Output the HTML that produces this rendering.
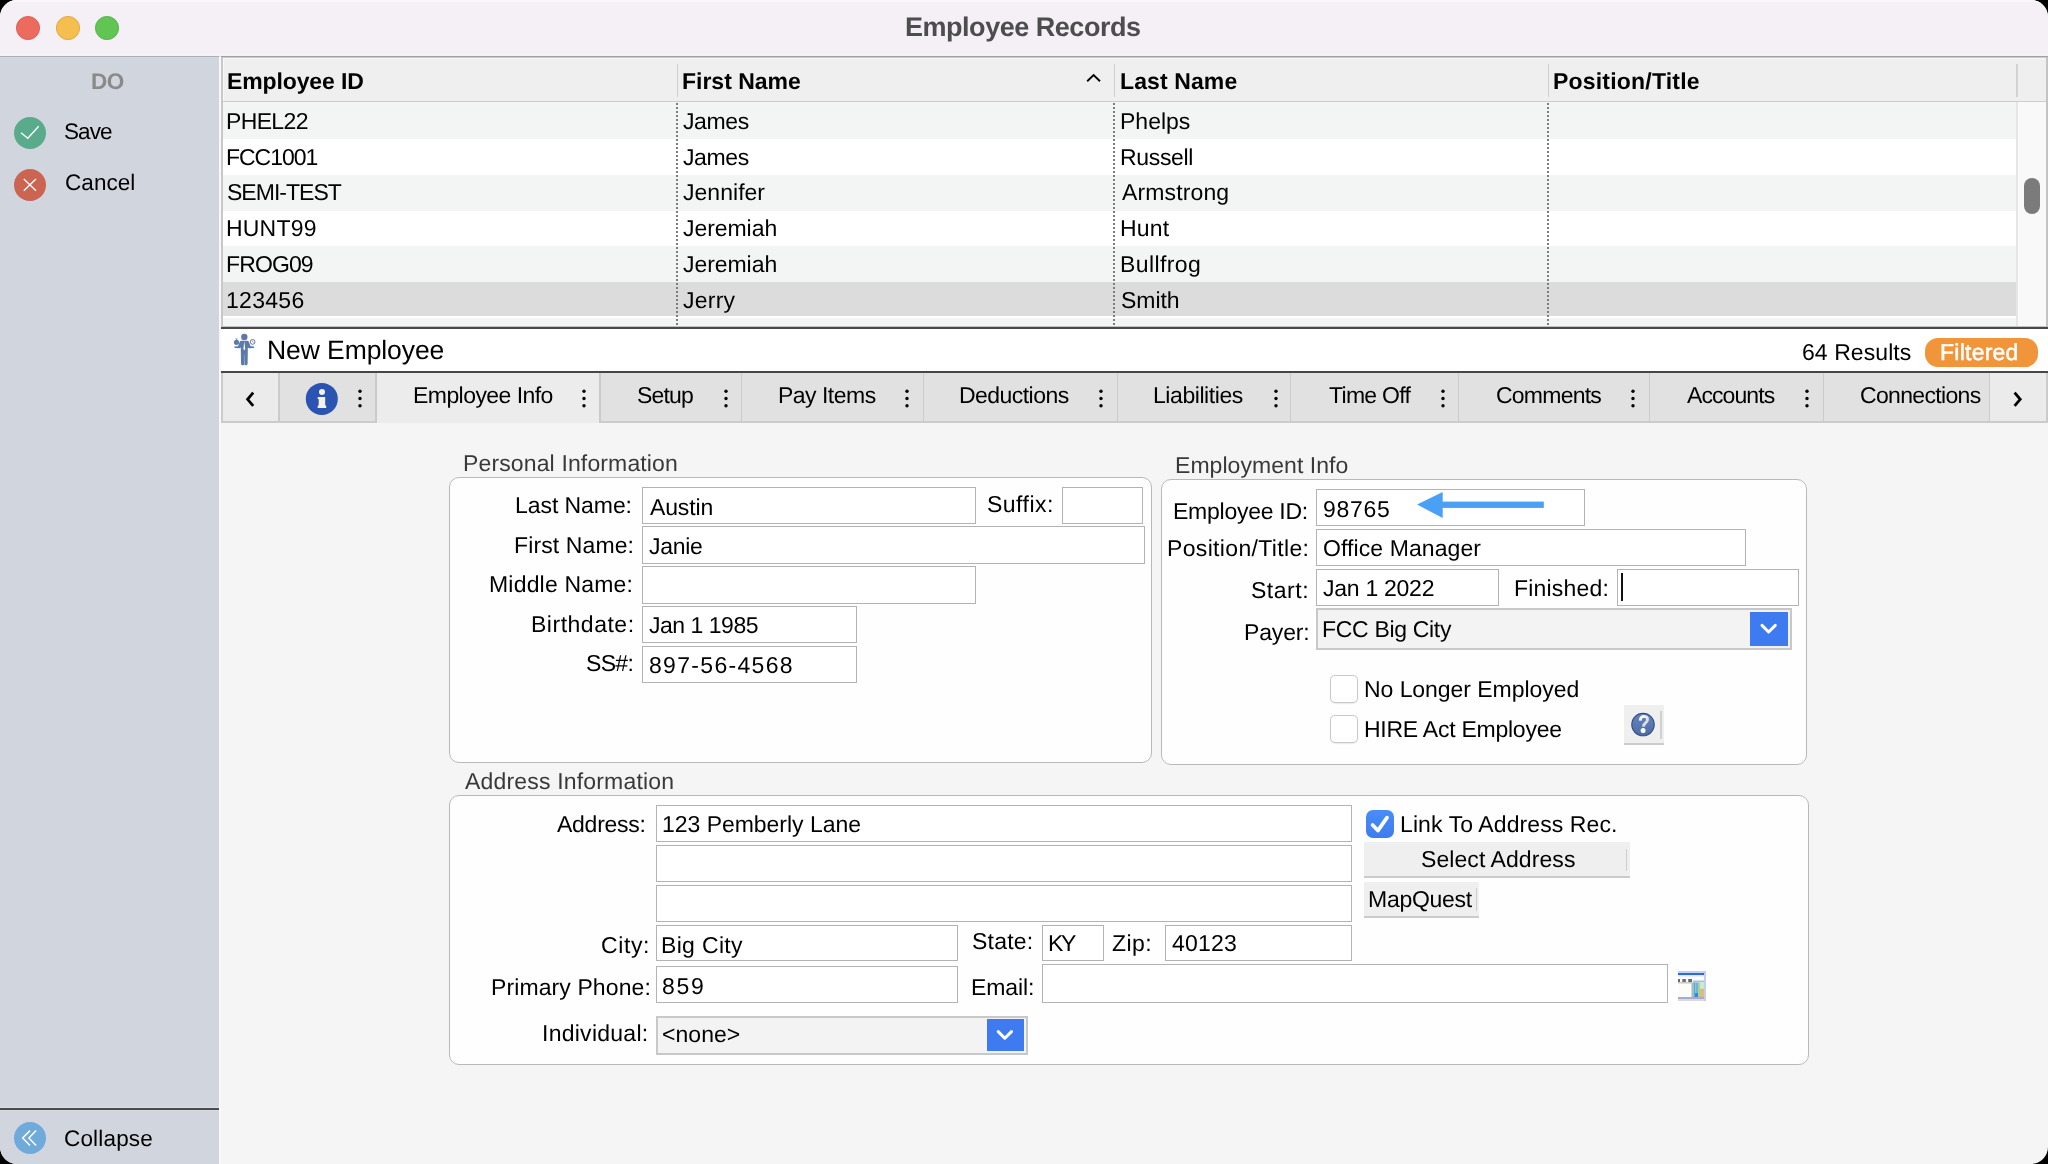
<!DOCTYPE html>
<html><head><meta charset="utf-8"><style>
html,body{margin:0;padding:0;background:#000;width:2048px;height:1164px;overflow:hidden}
div{font-family:"Liberation Sans",sans-serif;white-space:pre}
.t{will-change:transform;text-rendering:geometricPrecision}
#win{position:absolute;left:0;top:0;width:2048px;height:1164px;border-radius:17px;overflow:hidden;background:#f5f5f5}
</style></head><body><div id="win">
<div style='position:absolute;left:0px;top:0px;width:2048px;height:56px;background:#f5f0f6;z-index:1'></div>
<div style='position:absolute;left:0px;top:0px;width:2048px;height:2px;background:#faf7fa;z-index:1'></div>
<div style='position:absolute;left:0px;top:54px;width:2048px;height:1px;background:#f8f4f9;z-index:1'></div>
<div style='position:absolute;left:0px;top:56px;width:219px;height:1px;background:#a8b0bb;z-index:1'></div>
<div style='position:absolute;left:219px;top:56px;width:2px;height:1px;background:#e2e2e2;z-index:1'></div>
<div style='position:absolute;left:221px;top:56px;width:1827px;height:1px;background:#a2a2a2;z-index:1'></div>
<svg style='position:absolute;left:15px;top:15px;z-index:4' width='26' height='26' viewBox='0 0 26 26'><circle cx='13' cy='13' r='11.6' fill='#ed6a5e' stroke='#d5554a' stroke-width='0.8'/></svg>
<svg style='position:absolute;left:55px;top:15px;z-index:4' width='26' height='26' viewBox='0 0 26 26'><circle cx='13' cy='13' r='11.6' fill='#f5bf4f' stroke='#d9a032' stroke-width='0.8'/></svg>
<svg style='position:absolute;left:94px;top:15px;z-index:4' width='26' height='26' viewBox='0 0 26 26'><circle cx='13' cy='13' r='11.6' fill='#61c554' stroke='#4ea943' stroke-width='0.8'/></svg>
<div class='t' style='position:absolute;left:905.20px;top:14.10px;font-size:27px;line-height:27px;font-weight:700;color:#4d4d4d;letter-spacing:-0.473px;z-index:5;'>Employee Records</div>
<div style='position:absolute;left:0px;top:57px;width:219px;height:1107px;background:#d1d5de;z-index:1'></div>
<div style='position:absolute;left:219px;top:57px;width:2px;height:1107px;background:#f8f8f8;z-index:1'></div>
<div class='t' style='position:absolute;left:91.30px;top:71.40px;font-size:22.5px;line-height:22.5px;font-weight:700;color:#8a8a8a;letter-spacing:-0.500px;z-index:5;'>DO</div>
<svg style='position:absolute;left:14px;top:117px;z-index:4' width='32' height='32' viewBox='0 0 32 32'><circle cx='16' cy='16' r='16' fill='#59ab8b'/><path d='M7 15.8 L13.8 21.3 L24.7 9.3' fill='none' stroke='#fff' stroke-width='1.35'/></svg>
<div class='t' style='position:absolute;left:64.20px;top:120.60px;font-size:22.5px;line-height:22.5px;font-weight:400;color:#000;letter-spacing:-0.900px;z-index:5;'>Save</div>
<svg style='position:absolute;left:14px;top:169px;z-index:4' width='32' height='32' viewBox='0 0 32 32'><circle cx='16' cy='16' r='16' fill='#cc6452'/><path d='M9.8 10 L22 21.8 M22 10 L9.8 21.8' fill='none' stroke='#fff' stroke-width='1.35'/></svg>
<div class='t' style='position:absolute;left:64.50px;top:172.10px;font-size:22.5px;line-height:22.5px;font-weight:400;color:#000;letter-spacing:0.060px;z-index:5;'>Cancel</div>
<div style='position:absolute;left:0px;top:1107px;width:219px;height:1px;background:#dde0e8;z-index:1'></div>
<div style='position:absolute;left:0px;top:1108px;width:219px;height:2px;background:#4b4b4b;z-index:1'></div>
<div style='position:absolute;left:0px;top:1110px;width:219px;height:1px;background:#d8dbe3;z-index:1'></div>
<svg style='position:absolute;left:14px;top:1122px;z-index:4' width='32' height='32' viewBox='0 0 32 32'><circle cx='16' cy='16' r='16' fill='#6faadb'/><path d='M16 8.6 L8.7 16 L16 23.6 M22.1 8.6 L14.9 16 L22.1 23.6' fill='none' stroke='#fff' stroke-width='1.5'/></svg>
<div class='t' style='position:absolute;left:64.30px;top:1127.90px;font-size:22.5px;line-height:22.5px;font-weight:400;color:#000;letter-spacing:0.171px;z-index:5;'>Collapse</div>
<div style='position:absolute;left:221px;top:57px;width:1827px;height:270px;background:#ffffff;z-index:1'></div>
<div style='position:absolute;left:221px;top:57px;width:2px;height:270px;background:#c8c8c8;z-index:1'></div>
<div style='position:absolute;left:2046px;top:57px;width:2px;height:270px;background:#c4c4c4;z-index:1'></div>
<div style='position:absolute;left:223px;top:57px;width:1823px;height:44px;background:#efefef;z-index:1'></div>
<div style='position:absolute;left:223px;top:57px;width:1823px;height:1px;background:#c9c9c9;z-index:1'></div>
<div style='position:absolute;left:223px;top:58px;width:1823px;height:1px;background:#f8f8f8;z-index:1'></div>
<div style='position:absolute;left:223px;top:58px;width:1px;height:43px;background:#f8f8f8;z-index:1'></div>
<div style='position:absolute;left:223px;top:101px;width:1823px;height:1px;background:#cdcdcd;z-index:1'></div>
<div style='position:absolute;left:677px;top:64px;width:1px;height:33px;background:#cfcfcf;z-index:1'></div>
<div style='position:absolute;left:1114px;top:64px;width:1px;height:33px;background:#cfcfcf;z-index:1'></div>
<div style='position:absolute;left:1548px;top:64px;width:1px;height:33px;background:#cfcfcf;z-index:1'></div>
<div style='position:absolute;left:2016px;top:64px;width:2px;height:33px;background:#d2d2d2;z-index:1'></div>
<div class='t' style='position:absolute;left:227.00px;top:70.10px;font-size:23px;line-height:23px;font-weight:700;color:#000;letter-spacing:-0.130px;z-index:5;'>Employee ID</div>
<div class='t' style='position:absolute;left:682.10px;top:70.10px;font-size:23px;line-height:23px;font-weight:700;color:#000;letter-spacing:-0.011px;z-index:5;'>First Name</div>
<div class='t' style='position:absolute;left:1119.50px;top:70.10px;font-size:23px;line-height:23px;font-weight:700;color:#000;letter-spacing:0.113px;z-index:5;'>Last Name</div>
<div class='t' style='position:absolute;left:1553.00px;top:70.10px;font-size:23px;line-height:23px;font-weight:700;color:#000;letter-spacing:0.200px;z-index:5;'>Position/Title</div>
<svg style='position:absolute;left:1085px;top:72px;z-index:4' width='18' height='12' viewBox='0 0 18 12'><path d='M2.2 9.2 L8.6 3.0 L15 9.2' fill='none' stroke='#000' stroke-width='1.9'/></svg>
<div style='position:absolute;left:223px;top:102px;width:1793px;height:37px;background:#f3f4f4;z-index:1'></div>
<div style='position:absolute;left:223px;top:139px;width:1793px;height:36px;background:#ffffff;z-index:1'></div>
<div style='position:absolute;left:223px;top:175px;width:1793px;height:36px;background:#f3f4f4;z-index:1'></div>
<div style='position:absolute;left:223px;top:211px;width:1793px;height:35px;background:#ffffff;z-index:1'></div>
<div style='position:absolute;left:223px;top:246px;width:1793px;height:36px;background:#f3f4f4;z-index:1'></div>
<div style='position:absolute;left:223px;top:282px;width:1793px;height:36px;background:#ffffff;z-index:1'></div>
<div style='position:absolute;left:223px;top:318px;width:1793px;height:8px;background:#f3f4f4;z-index:1'></div>
<div style='position:absolute;left:223px;top:282px;width:1793px;height:34px;background:#dcdcdc;z-index:1'></div>
<div class='t' style='position:absolute;left:226.30px;top:109.90px;font-size:23px;line-height:23px;font-weight:400;color:#000;letter-spacing:-0.640px;z-index:5;'>PHEL22</div>
<div class='t' style='position:absolute;left:682.50px;top:109.90px;font-size:23px;line-height:23px;font-weight:400;color:#000;letter-spacing:-0.400px;z-index:5;'>James</div>
<div class='t' style='position:absolute;left:1119.50px;top:109.90px;font-size:23px;line-height:23px;font-weight:400;color:#000;letter-spacing:0.000px;z-index:5;'>Phelps</div>
<div class='t' style='position:absolute;left:226.30px;top:145.68px;font-size:23px;line-height:23px;font-weight:400;color:#000;letter-spacing:-1.033px;z-index:5;'>FCC1001</div>
<div class='t' style='position:absolute;left:682.50px;top:145.68px;font-size:23px;line-height:23px;font-weight:400;color:#000;letter-spacing:-0.400px;z-index:5;'>James</div>
<div class='t' style='position:absolute;left:1119.50px;top:145.68px;font-size:23px;line-height:23px;font-weight:400;color:#000;letter-spacing:-0.333px;z-index:5;'>Russell</div>
<div class='t' style='position:absolute;left:227.30px;top:181.46px;font-size:23px;line-height:23px;font-weight:400;color:#000;letter-spacing:-0.975px;z-index:5;'>SEMI-TEST</div>
<div class='t' style='position:absolute;left:682.50px;top:181.46px;font-size:23px;line-height:23px;font-weight:400;color:#000;letter-spacing:0.029px;z-index:5;'>Jennifer</div>
<div class='t' style='position:absolute;left:1121.50px;top:181.46px;font-size:23px;line-height:23px;font-weight:400;color:#000;letter-spacing:0.125px;z-index:5;'>Armstrong</div>
<div class='t' style='position:absolute;left:226.30px;top:217.24px;font-size:23px;line-height:23px;font-weight:400;color:#000;letter-spacing:0.200px;z-index:5;'>HUNT99</div>
<div class='t' style='position:absolute;left:682.50px;top:217.24px;font-size:23px;line-height:23px;font-weight:400;color:#000;letter-spacing:-0.057px;z-index:5;'>Jeremiah</div>
<div class='t' style='position:absolute;left:1119.50px;top:217.24px;font-size:23px;line-height:23px;font-weight:400;color:#000;letter-spacing:0.167px;z-index:5;'>Hunt</div>
<div class='t' style='position:absolute;left:226.30px;top:253.02px;font-size:23px;line-height:23px;font-weight:400;color:#000;letter-spacing:-0.880px;z-index:5;'>FROG09</div>
<div class='t' style='position:absolute;left:682.50px;top:253.02px;font-size:23px;line-height:23px;font-weight:400;color:#000;letter-spacing:-0.057px;z-index:5;'>Jeremiah</div>
<div class='t' style='position:absolute;left:1119.50px;top:253.02px;font-size:23px;line-height:23px;font-weight:400;color:#000;letter-spacing:0.400px;z-index:5;'>Bullfrog</div>
<div class='t' style='position:absolute;left:226.30px;top:288.80px;font-size:23px;line-height:23px;font-weight:400;color:#000;letter-spacing:0.300px;z-index:5;'>123456</div>
<div class='t' style='position:absolute;left:682.50px;top:288.80px;font-size:23px;line-height:23px;font-weight:400;color:#000;letter-spacing:0.250px;z-index:5;'>Jerry</div>
<div class='t' style='position:absolute;left:1120.50px;top:288.80px;font-size:23px;line-height:23px;font-weight:400;color:#000;letter-spacing:-0.050px;z-index:5;'>Smith</div>
<div style='position:absolute;left:676px;top:103px;width:2px;height:223px;background:repeating-linear-gradient(to bottom,#7d7d7d 0,#7d7d7d 2px,transparent 2px,transparent 4px);z-index:2'></div>
<div style='position:absolute;left:1113px;top:103px;width:2px;height:223px;background:repeating-linear-gradient(to bottom,#7d7d7d 0,#7d7d7d 2px,transparent 2px,transparent 4px);z-index:2'></div>
<div style='position:absolute;left:1547px;top:103px;width:2px;height:223px;background:repeating-linear-gradient(to bottom,#7d7d7d 0,#7d7d7d 2px,transparent 2px,transparent 4px);z-index:2'></div>
<div style='position:absolute;left:2016px;top:102px;width:2px;height:224px;background:#e6e6e6;z-index:1'></div>
<div style='position:absolute;left:2018px;top:102px;width:28px;height:224px;background:#f9f9f9;z-index:1'></div>
<div style='position:absolute;left:2024px;top:178px;width:16px;height:36px;background:#7b7b7b;border-radius:8px;z-index:1'></div>
<div style='position:absolute;left:223px;top:326px;width:1823px;height:1px;background:#c2c2c2;z-index:1'></div>
<div style='position:absolute;left:221px;top:327px;width:1827px;height:2px;background:#494949;z-index:1'></div>
<div style='position:absolute;left:221px;top:329px;width:1827px;height:42px;background:#ffffff;z-index:1'></div>
<div class='t' style='position:absolute;left:267.00px;top:337.40px;font-size:26.5px;line-height:26.5px;font-weight:400;color:#000;letter-spacing:-0.082px;z-index:5;'>New Employee</div>
<div class='t' style='position:absolute;left:1801.80px;top:340.80px;font-size:23px;line-height:23px;font-weight:400;color:#000;letter-spacing:0.067px;z-index:5;'>64 Results</div>
<div style='position:absolute;left:1925px;top:338px;width:113px;height:29px;background:#f0953a;border-radius:13px;z-index:1'></div>
<div class='t' style='position:absolute;left:1940.30px;top:340.80px;font-size:23px;line-height:23px;font-weight:400;color:#ffffff;letter-spacing:0.243px;z-index:5;-webkit-text-stroke:0.5px #fff'>Filtered</div>
<div style='position:absolute;left:221px;top:371px;width:1827px;height:2px;background:#474747;z-index:1'></div>
<div style='position:absolute;left:221px;top:373px;width:1827px;height:50px;background:#e1e1e1;z-index:1'></div>
<div style='position:absolute;left:221px;top:421px;width:1827px;height:2px;background:#cbcbcb;z-index:1'></div>
<div style='position:absolute;left:221px;top:373px;width:2px;height:50px;background:#cbcbcb;z-index:1'></div>
<div style='position:absolute;left:2046px;top:373px;width:2px;height:50px;background:#cbcbcb;z-index:1'></div>
<div style='position:absolute;left:223px;top:373px;width:55px;height:48px;background:#ebebeb;z-index:1'></div>
<div style='position:absolute;left:1990px;top:373px;width:56px;height:48px;background:#ebebeb;z-index:1'></div>
<div style='position:absolute;left:377px;top:373px;width:222px;height:50px;background:#ececec;z-index:1'></div>
<div style='position:absolute;left:278px;top:373px;width:2px;height:48px;background:#cbcbcb;z-index:1'></div>
<div style='position:absolute;left:375px;top:373px;width:2px;height:50px;background:#cbcbcb;z-index:1'></div>
<div style='position:absolute;left:599px;top:373px;width:2px;height:50px;background:#cbcbcb;z-index:1'></div>
<div style='position:absolute;left:741px;top:373px;width:1px;height:48px;background:#cbcbcb;z-index:1'></div>
<div style='position:absolute;left:923px;top:373px;width:1px;height:48px;background:#cbcbcb;z-index:1'></div>
<div style='position:absolute;left:1117px;top:373px;width:1px;height:48px;background:#cbcbcb;z-index:1'></div>
<div style='position:absolute;left:1290px;top:373px;width:1px;height:48px;background:#cbcbcb;z-index:1'></div>
<div style='position:absolute;left:1458px;top:373px;width:1px;height:48px;background:#cbcbcb;z-index:1'></div>
<div style='position:absolute;left:1649px;top:373px;width:1px;height:48px;background:#cbcbcb;z-index:1'></div>
<div style='position:absolute;left:1823px;top:373px;width:1px;height:48px;background:#cbcbcb;z-index:1'></div>
<div style='position:absolute;left:1989px;top:373px;width:1px;height:48px;background:#cbcbcb;z-index:1'></div>
<svg style='position:absolute;left:240px;top:388px;z-index:4' width='20' height='22' viewBox='0 0 20 22'><path d='M13.2 4.6 L7.6 11.3 L13.2 17.9' fill='none' stroke='#000' stroke-width='2.8'/></svg>
<svg style='position:absolute;left:2007px;top:388px;z-index:4' width='20' height='22' viewBox='0 0 20 22'><path d='M7.6 4.6 L13.2 11.3 L7.6 17.9' fill='none' stroke='#000' stroke-width='2.8'/></svg>
<div class='t' style='position:absolute;left:412.60px;top:383.80px;font-size:23px;line-height:23px;font-weight:400;color:#000;letter-spacing:-0.558px;z-index:5;'>Employee Info</div>
<div class='t' style='position:absolute;left:637.30px;top:383.80px;font-size:23px;line-height:23px;font-weight:400;color:#000;letter-spacing:-0.850px;z-index:5;'>Setup</div>
<div class='t' style='position:absolute;left:777.60px;top:383.80px;font-size:23px;line-height:23px;font-weight:400;color:#000;letter-spacing:-0.513px;z-index:5;'>Pay Items</div>
<div class='t' style='position:absolute;left:959.40px;top:383.80px;font-size:23px;line-height:23px;font-weight:400;color:#000;letter-spacing:-0.544px;z-index:5;'>Deductions</div>
<div class='t' style='position:absolute;left:1153.00px;top:383.80px;font-size:23px;line-height:23px;font-weight:400;color:#000;letter-spacing:-0.430px;z-index:5;'>Liabilities</div>
<div class='t' style='position:absolute;left:1328.80px;top:383.80px;font-size:23px;line-height:23px;font-weight:400;color:#000;letter-spacing:-0.714px;z-index:5;'>Time Off</div>
<div class='t' style='position:absolute;left:1495.90px;top:383.80px;font-size:23px;line-height:23px;font-weight:400;color:#000;letter-spacing:-0.771px;z-index:5;'>Comments</div>
<div class='t' style='position:absolute;left:1686.90px;top:383.80px;font-size:23px;line-height:23px;font-weight:400;color:#000;letter-spacing:-0.914px;z-index:5;'>Accounts</div>
<div class='t' style='position:absolute;left:1860.20px;top:383.80px;font-size:23px;line-height:23px;font-weight:400;color:#000;letter-spacing:-0.670px;z-index:5;'>Connections</div>
<svg style='position:absolute;left:356.8px;top:386px;z-index:4' width='6' height='24' viewBox='0 0 6 24'><circle cx='3' cy='5.2' r='1.7' fill='#000'/><circle cx='3' cy='12.5' r='1.7' fill='#000'/><circle cx='3' cy='19.7' r='1.7' fill='#000'/></svg>
<svg style='position:absolute;left:581.2px;top:386px;z-index:4' width='6' height='24' viewBox='0 0 6 24'><circle cx='3' cy='5.2' r='1.7' fill='#000'/><circle cx='3' cy='12.5' r='1.7' fill='#000'/><circle cx='3' cy='19.7' r='1.7' fill='#000'/></svg>
<svg style='position:absolute;left:722.6px;top:386px;z-index:4' width='6' height='24' viewBox='0 0 6 24'><circle cx='3' cy='5.2' r='1.7' fill='#000'/><circle cx='3' cy='12.5' r='1.7' fill='#000'/><circle cx='3' cy='19.7' r='1.7' fill='#000'/></svg>
<svg style='position:absolute;left:904.3px;top:386px;z-index:4' width='6' height='24' viewBox='0 0 6 24'><circle cx='3' cy='5.2' r='1.7' fill='#000'/><circle cx='3' cy='12.5' r='1.7' fill='#000'/><circle cx='3' cy='19.7' r='1.7' fill='#000'/></svg>
<svg style='position:absolute;left:1098px;top:386px;z-index:4' width='6' height='24' viewBox='0 0 6 24'><circle cx='3' cy='5.2' r='1.7' fill='#000'/><circle cx='3' cy='12.5' r='1.7' fill='#000'/><circle cx='3' cy='19.7' r='1.7' fill='#000'/></svg>
<svg style='position:absolute;left:1272.8px;top:386px;z-index:4' width='6' height='24' viewBox='0 0 6 24'><circle cx='3' cy='5.2' r='1.7' fill='#000'/><circle cx='3' cy='12.5' r='1.7' fill='#000'/><circle cx='3' cy='19.7' r='1.7' fill='#000'/></svg>
<svg style='position:absolute;left:1439.8px;top:386px;z-index:4' width='6' height='24' viewBox='0 0 6 24'><circle cx='3' cy='5.2' r='1.7' fill='#000'/><circle cx='3' cy='12.5' r='1.7' fill='#000'/><circle cx='3' cy='19.7' r='1.7' fill='#000'/></svg>
<svg style='position:absolute;left:1629.5px;top:386px;z-index:4' width='6' height='24' viewBox='0 0 6 24'><circle cx='3' cy='5.2' r='1.7' fill='#000'/><circle cx='3' cy='12.5' r='1.7' fill='#000'/><circle cx='3' cy='19.7' r='1.7' fill='#000'/></svg>
<svg style='position:absolute;left:1804px;top:386px;z-index:4' width='6' height='24' viewBox='0 0 6 24'><circle cx='3' cy='5.2' r='1.7' fill='#000'/><circle cx='3' cy='12.5' r='1.7' fill='#000'/><circle cx='3' cy='19.7' r='1.7' fill='#000'/></svg>
<svg style='position:absolute;left:305px;top:382px;z-index:4' width='34' height='34' viewBox='0 0 34 34'><circle cx='16.8' cy='16.9' r='16' fill='#2b53b1'/><circle cx='17' cy='10' r='3' fill='#f4f1ea'/><path d='M12.7 14.9 H20.2 V23.4 H21.2 V25.9 H12.7 V23.4 H13.7 V17 H12.7 Z' fill='#f4f1ea'/></svg>
<div class='t' style='position:absolute;left:463.20px;top:452.20px;font-size:23px;line-height:23px;font-weight:400;color:#393939;letter-spacing:0.137px;z-index:5;'>Personal Information</div>
<div style='position:absolute;left:449px;top:477px;width:703px;height:286px;background:#fefefe;border:1px solid #b9b9b9;border-radius:10px;box-sizing:border-box;z-index:1'></div>
<div class='t' style='position:absolute;left:1175.00px;top:453.70px;font-size:23px;line-height:23px;font-weight:400;color:#393939;letter-spacing:0.050px;z-index:5;'>Employment Info</div>
<div style='position:absolute;left:1161px;top:479px;width:646px;height:286px;background:#fefefe;border:1px solid #b9b9b9;border-radius:10px;box-sizing:border-box;z-index:1'></div>
<div class='t' style='position:absolute;left:464.60px;top:769.70px;font-size:23px;line-height:23px;font-weight:400;color:#393939;letter-spacing:0.178px;z-index:5;'>Address Information</div>
<div style='position:absolute;left:449px;top:795px;width:1360px;height:270px;background:#fefefe;border:1px solid #b9b9b9;border-radius:10px;box-sizing:border-box;z-index:1'></div>
<div style='position:absolute;left:642px;top:487px;width:334px;height:37px;background:#ffffff;border:1px solid #b3b3b3;box-sizing:border-box;z-index:3'></div>
<div style='position:absolute;left:1062px;top:487px;width:81px;height:37px;background:#ffffff;border:1px solid #b3b3b3;box-sizing:border-box;z-index:3'></div>
<div style='position:absolute;left:642px;top:526px;width:503px;height:38px;background:#ffffff;border:1px solid #b3b3b3;box-sizing:border-box;z-index:3'></div>
<div style='position:absolute;left:642px;top:566px;width:334px;height:38px;background:#ffffff;border:1px solid #b3b3b3;box-sizing:border-box;z-index:3'></div>
<div style='position:absolute;left:642px;top:606px;width:215px;height:37px;background:#ffffff;border:1px solid #b3b3b3;box-sizing:border-box;z-index:3'></div>
<div style='position:absolute;left:642px;top:646px;width:215px;height:37px;background:#ffffff;border:1px solid #b3b3b3;box-sizing:border-box;z-index:3'></div>
<div class='t' style='position:absolute;left:514.80px;top:493.50px;font-size:23px;line-height:23px;font-weight:400;color:#000;letter-spacing:-0.067px;z-index:5;'>Last Name:</div>
<div class='t' style='position:absolute;left:986.90px;top:493.40px;font-size:23px;line-height:23px;font-weight:400;color:#000;letter-spacing:0.483px;z-index:5;'>Suffix:</div>
<div class='t' style='position:absolute;left:514.10px;top:533.50px;font-size:23px;line-height:23px;font-weight:400;color:#000;letter-spacing:0.110px;z-index:5;'>First Name:</div>
<div class='t' style='position:absolute;left:489.00px;top:573.20px;font-size:23px;line-height:23px;font-weight:400;color:#000;letter-spacing:0.191px;z-index:5;'>Middle Name:</div>
<div class='t' style='position:absolute;left:530.90px;top:612.50px;font-size:23px;line-height:23px;font-weight:400;color:#000;letter-spacing:0.511px;z-index:5;'>Birthdate:</div>
<div class='t' style='position:absolute;left:585.50px;top:652.30px;font-size:23px;line-height:23px;font-weight:400;color:#000;letter-spacing:-0.667px;z-index:5;'>SS#:</div>
<div class='t' style='position:absolute;left:649.70px;top:495.50px;font-size:23px;line-height:23px;font-weight:400;color:#000;letter-spacing:-0.140px;z-index:5;'>Austin</div>
<div class='t' style='position:absolute;left:648.70px;top:535.30px;font-size:23px;line-height:23px;font-weight:400;color:#000;letter-spacing:-0.300px;z-index:5;'>Janie</div>
<div class='t' style='position:absolute;left:649.00px;top:614.40px;font-size:23px;line-height:23px;font-weight:400;color:#000;letter-spacing:-0.478px;z-index:5;'>Jan 1 1985</div>
<div class='t' style='position:absolute;left:649.00px;top:653.80px;font-size:23px;line-height:23px;font-weight:400;color:#000;letter-spacing:1.310px;z-index:5;'>897-56-4568</div>
<div style='position:absolute;left:1316px;top:489px;width:269px;height:37px;background:#ffffff;border:1px solid #b3b3b3;box-sizing:border-box;z-index:3'></div>
<div style='position:absolute;left:1316px;top:529px;width:430px;height:37px;background:#ffffff;border:1px solid #b3b3b3;box-sizing:border-box;z-index:3'></div>
<div style='position:absolute;left:1316px;top:569px;width:183px;height:37px;background:#ffffff;border:1px solid #b3b3b3;box-sizing:border-box;z-index:3'></div>
<div style='position:absolute;left:1617px;top:569px;width:182px;height:37px;background:#ffffff;border:1px solid #b3b3b3;box-sizing:border-box;z-index:3'></div>
<div class='t' style='position:absolute;left:1173.20px;top:499.80px;font-size:23px;line-height:23px;font-weight:400;color:#000;letter-spacing:-0.255px;z-index:5;'>Employee ID:</div>
<div class='t' style='position:absolute;left:1167.30px;top:536.90px;font-size:23px;line-height:23px;font-weight:400;color:#000;letter-spacing:0.336px;z-index:5;'>Position/Title:</div>
<div class='t' style='position:absolute;left:1250.90px;top:578.70px;font-size:23px;line-height:23px;font-weight:400;color:#000;letter-spacing:0.520px;z-index:5;'>Start:</div>
<div class='t' style='position:absolute;left:1514.30px;top:576.50px;font-size:23px;line-height:23px;font-weight:400;color:#000;letter-spacing:0.188px;z-index:5;'>Finished:</div>
<div class='t' style='position:absolute;left:1244.00px;top:620.50px;font-size:23px;line-height:23px;font-weight:400;color:#000;letter-spacing:-0.160px;z-index:5;'>Payer:</div>
<div class='t' style='position:absolute;left:1322.60px;top:498.00px;font-size:23px;line-height:23px;font-weight:400;color:#000;letter-spacing:0.700px;z-index:5;'>98765</div>
<div class='t' style='position:absolute;left:1322.90px;top:537.20px;font-size:23px;line-height:23px;font-weight:400;color:#000;letter-spacing:0.092px;z-index:5;'>Office Manager</div>
<div class='t' style='position:absolute;left:1322.90px;top:576.50px;font-size:23px;line-height:23px;font-weight:400;color:#000;letter-spacing:-0.267px;z-index:5;'>Jan 1 2022</div>
<div style='position:absolute;left:1621px;top:573px;width:2px;height:28px;background:#111;z-index:4'></div>
<div style='position:absolute;left:1316px;top:608px;width:476px;height:42px;background:#f3f3f3;border:2px solid #c8c8c8;box-sizing:border-box;z-index:3'></div>
<div style='position:absolute;left:1750px;top:612px;width:38px;height:34px;background:#3f7bf0;z-index:4'></div>
<svg style='position:absolute;left:1756px;top:618px;z-index:4' width='26' height='22' viewBox='0 0 26 22'><path d='M6 7.4 L12.6 14 L19.3 7.4' fill='none' stroke='#fff' stroke-width='3' stroke-linecap='round' stroke-linejoin='round'/></svg>
<div class='t' style='position:absolute;left:1321.90px;top:618.40px;font-size:23px;line-height:23px;font-weight:400;color:#000;letter-spacing:-0.318px;z-index:5;'>FCC Big City</div>
<svg style='position:absolute;left:1410px;top:490px;z-index:4' width='140' height='30' viewBox='0 0 140 30'><path d='M7.1 14.6 L32.7 1.9 L32.7 28.0 Z' fill='#49a0f5'/><rect x='32' y='11.6' width='101.8' height='6.3' fill='#49a0f5'/></svg>
<div style='position:absolute;left:1330px;top:675px;width:28px;height:28px;background:#fff;border:1px solid #c9c9c9;border-radius:5px;box-sizing:border-box;box-shadow:0 0.5px 1px rgba(0,0,0,0.08);z-index:3'></div>
<div style='position:absolute;left:1330px;top:715px;width:28px;height:28px;background:#fff;border:1px solid #c9c9c9;border-radius:5px;box-sizing:border-box;box-shadow:0 0.5px 1px rgba(0,0,0,0.08);z-index:3'></div>
<div class='t' style='position:absolute;left:1363.70px;top:678.10px;font-size:23px;line-height:23px;font-weight:400;color:#000;letter-spacing:-0.053px;z-index:5;'>No Longer Employed</div>
<div class='t' style='position:absolute;left:1363.70px;top:717.90px;font-size:23px;line-height:23px;font-weight:400;color:#000;letter-spacing:-0.250px;z-index:5;'>HIRE Act Employee</div>
<div style='position:absolute;left:1624px;top:705px;width:40px;height:40px;background:#efefef;border-bottom:2px solid #cccccc;box-sizing:border-box;z-index:3'></div>
<div style='position:absolute;left:1660px;top:711px;width:2px;height:28px;background:#d0d0d0;z-index:4'></div>
<svg style='position:absolute;left:1630px;top:711px;z-index:4' width='26' height='28' viewBox='0 0 26 28'><defs><linearGradient id='hq' x1='0' y1='0' x2='0' y2='1'><stop offset='0' stop-color='#6685bd'/><stop offset='1' stop-color='#4d6ca6'/></linearGradient><linearGradient id='hs' x1='0' y1='0' x2='1' y2='1'><stop offset='0' stop-color='#ffffff'/><stop offset='1' stop-color='#cfcfcf'/></linearGradient></defs><circle cx='13' cy='13.6' r='11.2' fill='url(#hq)' stroke='#2e4a82' stroke-width='1.1'/><path d='M10.3 9.6 Q10.6 5.4 14.1 5.4 Q17.8 5.6 17.5 8.8 Q17.3 10.8 15.2 12.3 Q13.6 13.5 13.4 15.6' fill='none' stroke='url(#hs)' stroke-width='2.9'/><circle cx='13.1' cy='19.5' r='2.5' fill='#fff'/></svg>
<div style='position:absolute;left:656px;top:804.5px;width:696px;height:37.5px;background:#ffffff;border:1px solid #b3b3b3;box-sizing:border-box;z-index:3'></div>
<div style='position:absolute;left:656px;top:844.5px;width:696px;height:37.5px;background:#ffffff;border:1px solid #b3b3b3;box-sizing:border-box;z-index:3'></div>
<div style='position:absolute;left:656px;top:884.5px;width:696px;height:37.5px;background:#ffffff;border:1px solid #b3b3b3;box-sizing:border-box;z-index:3'></div>
<div style='position:absolute;left:656px;top:924.5px;width:302px;height:36.5px;background:#ffffff;border:1px solid #b3b3b3;box-sizing:border-box;z-index:3'></div>
<div style='position:absolute;left:1042px;top:924.5px;width:62px;height:36.5px;background:#ffffff;border:1px solid #b3b3b3;box-sizing:border-box;z-index:3'></div>
<div style='position:absolute;left:1165px;top:924.5px;width:187px;height:36.5px;background:#ffffff;border:1px solid #b3b3b3;box-sizing:border-box;z-index:3'></div>
<div style='position:absolute;left:656px;top:966px;width:302px;height:37px;background:#ffffff;border:1px solid #b3b3b3;box-sizing:border-box;z-index:3'></div>
<div style='position:absolute;left:1042px;top:963.5px;width:626px;height:39.5px;background:#ffffff;border:1px solid #b3b3b3;box-sizing:border-box;z-index:3'></div>
<div class='t' style='position:absolute;left:556.70px;top:812.60px;font-size:23px;line-height:23px;font-weight:400;color:#000;letter-spacing:-0.257px;z-index:5;'>Address:</div>
<div class='t' style='position:absolute;left:661.50px;top:813.40px;font-size:23px;line-height:23px;font-weight:400;color:#000;letter-spacing:-0.031px;z-index:5;'>123 Pemberly Lane</div>
<div style='position:absolute;left:1366px;top:810px;width:28px;height:28px;background:linear-gradient(#488ef6,#3d7cf0);border-radius:7px;z-index:3'></div>
<svg style='position:absolute;left:1366px;top:810px;z-index:4' width='28' height='28' viewBox='0 0 28 28'><path d='M6.6 15 L11.9 20.6 L21 7.6' fill='none' stroke='#fff' stroke-width='3.7' stroke-linecap='round' stroke-linejoin='round'/></svg>
<div class='t' style='position:absolute;left:1399.50px;top:813.20px;font-size:23px;line-height:23px;font-weight:400;color:#000;letter-spacing:0.095px;z-index:5;'>Link To Address Rec.</div>
<div style='position:absolute;left:1364px;top:842px;width:266px;height:36px;background:#efefef;border-bottom:2px solid #cbcbcb;box-sizing:border-box;z-index:3'></div>
<div style='position:absolute;left:1626px;top:848.5px;width:1px;height:22.5px;background:#cfcfcf;z-index:4'></div>
<div class='t' style='position:absolute;left:1420.50px;top:848.30px;font-size:23px;line-height:23px;font-weight:400;color:#000;letter-spacing:0.077px;z-index:5;'>Select Address</div>
<div style='position:absolute;left:1364px;top:882px;width:115px;height:36px;background:#efefef;border-bottom:2px solid #cbcbcb;box-sizing:border-box;z-index:3'></div>
<div style='position:absolute;left:1476px;top:888px;width:1px;height:23px;background:#cfcfcf;z-index:4'></div>
<div class='t' style='position:absolute;left:1368.20px;top:888.20px;font-size:23px;line-height:23px;font-weight:400;color:#000;letter-spacing:-0.271px;z-index:5;'>MapQuest</div>
<div class='t' style='position:absolute;left:600.50px;top:934.00px;font-size:23px;line-height:23px;font-weight:400;color:#000;letter-spacing:0.600px;z-index:5;'>City:</div>
<div class='t' style='position:absolute;left:661.00px;top:934.00px;font-size:23px;line-height:23px;font-weight:400;color:#000;letter-spacing:0.329px;z-index:5;'>Big City</div>
<div class='t' style='position:absolute;left:972.30px;top:930.30px;font-size:23px;line-height:23px;font-weight:400;color:#000;letter-spacing:0.220px;z-index:5;'>State:</div>
<div class='t' style='position:absolute;left:1047.50px;top:932.20px;font-size:23px;line-height:23px;font-weight:400;color:#000;letter-spacing:-2.400px;z-index:5;'>KY</div>
<div class='t' style='position:absolute;left:1112.00px;top:932.20px;font-size:23px;line-height:23px;font-weight:400;color:#000;letter-spacing:0.467px;z-index:5;'>Zip:</div>
<div class='t' style='position:absolute;left:1171.50px;top:932.20px;font-size:23px;line-height:23px;font-weight:400;color:#000;letter-spacing:0.200px;z-index:5;'>40123</div>
<div class='t' style='position:absolute;left:490.50px;top:975.80px;font-size:23px;line-height:23px;font-weight:400;color:#000;letter-spacing:0.100px;z-index:5;'>Primary Phone:</div>
<div class='t' style='position:absolute;left:662.00px;top:974.90px;font-size:23px;line-height:23px;font-weight:400;color:#000;letter-spacing:1.650px;z-index:5;'>859</div>
<div class='t' style='position:absolute;left:971.30px;top:975.80px;font-size:23px;line-height:23px;font-weight:400;color:#000;letter-spacing:-0.080px;z-index:5;'>Email:</div>
<div class='t' style='position:absolute;left:542.30px;top:1021.80px;font-size:23px;line-height:23px;font-weight:400;color:#000;letter-spacing:0.260px;z-index:5;'>Individual:</div>
<div style='position:absolute;left:656px;top:1015.5px;width:372px;height:39.5px;background:#f3f3f3;border:2px solid #c8c8c8;box-sizing:border-box;z-index:3'></div>
<div style='position:absolute;left:986.5px;top:1019px;width:37.5px;height:32px;background:#3f7bf0;z-index:4'></div>
<svg style='position:absolute;left:992px;top:1024px;z-index:4' width='26' height='22' viewBox='0 0 26 22'><path d='M6.2 7.6 L12.8 14.2 L19.5 7.6' fill='none' stroke='#fff' stroke-width='3' stroke-linecap='round' stroke-linejoin='round'/></svg>
<div class='t' style='position:absolute;left:662.00px;top:1023.30px;font-size:23px;line-height:23px;font-weight:400;color:#000;letter-spacing:0.040px;z-index:5;'>&lt;none&gt;</div>
<svg style='position:absolute;left:1678px;top:971px;z-index:4' width='28' height='30' viewBox='0 0 28 30'><rect x='0' y='0' width='28' height='30' fill='#fcfcf8'/><rect x='0' y='0' width='28' height='2' fill='#c9d3f0'/><rect x='26' y='0' width='2' height='30' fill='#c3cdf0'/><rect x='0' y='2' width='26' height='2.2' fill='#2c6fd2'/><rect x='24.8' y='2' width='1.2' height='2.2' fill='#6a4a9a'/><rect x='0' y='4.2' width='26' height='1.3' fill='#dfe5ef'/><rect x='0' y='8' width='2' height='3' fill='#6a6a6a'/><rect x='4.3' y='8' width='3.6' height='3' fill='#707070'/><rect x='10.2' y='8' width='3.8' height='3' fill='#6a6a6a'/><rect x='0' y='11' width='14' height='1.5' fill='#c8c8c8'/><rect x='15' y='9.5' width='11' height='2' fill='#a9c0d8'/><rect x='13.5' y='11.5' width='2' height='14.5' fill='#9cc4a8'/><rect x='15.5' y='11.5' width='2' height='14.5' fill='#5aa6e6'/><rect x='17.5' y='11.5' width='2.5' height='14.5' fill='#70b4d8'/><rect x='20' y='11.5' width='2' height='14.5' fill='#a8d0a0'/><rect x='22' y='11.5' width='4' height='6' fill='#c8ecd0'/><rect x='22' y='17.5' width='4' height='8.5' fill='#d8bf7c'/><rect x='17' y='22' width='3' height='4' fill='#3a86e0'/><rect x='0' y='26' width='26' height='2' fill='#a9a9d2'/><rect x='0' y='28' width='26' height='2' fill='#d9d9de'/></svg>
<svg style='position:absolute;left:230px;top:332px;z-index:4' width='28' height='36' viewBox='0 0 28 36'><g fill='#5b7aa9'><circle cx='14.3' cy='4.9' r='3.2'/><path d='M11.4 8.8 H17.2 Q18.4 8.8 19 10.2 L20.6 14.3 L24 14.5 Q24.4 15.3 24 16.1 L19.2 16.3 L17.8 15.4 V19.6 L17.6 31.8 Q17.5 33.2 16.3 33.2 H15.2 Q14.6 33.2 14.5 32.2 L14.3 22.5 L14.1 32.2 Q14 33.2 13.4 33.2 H12.3 Q11.1 33.2 11 31.8 L10.8 19.6 V15.4 L9.4 16.3 L4.6 16.1 Q4.2 15.3 4.6 14.5 L8 14.3 L9.6 10.2 Q10.2 8.8 11.4 8.8 Z'/><circle cx='6.5' cy='10.3' r='2.6'/><path d='M5.2 6.6 L6.5 8 L7.8 6.6 Z'/></g><circle cx='22.6' cy='9.9' r='2.4' fill='none' stroke='#5b7aa9' stroke-width='1'/><path d='M22.6 8.6 V10 L23.5 10.6' fill='none' stroke='#5b7aa9' stroke-width='0.6'/><path d='M14.3 9.2 L13.4 16.8 L14.3 18.4 L15.2 16.8 Z' fill='#fff'/><rect x='14.1' y='22' width='0.4' height='11' fill='#93a7c8'/></svg>
</div></body></html>
